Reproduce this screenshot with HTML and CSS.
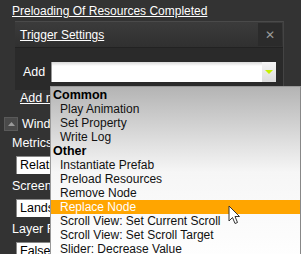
FILE: index.html
```html
<!DOCTYPE html>
<html lang="en">
<head>
	<meta charset="UTF-8">
	<title>Trigger Settings</title>
	<link rel="stylesheet" href="styles.css">
</head>
<body>
	<div class="page">
		<a class="title" href="#">Preloading Of Resources Completed</a>

		<div class="dialog">
			<div class="dlg-head">
				<a class="dlg-title" href="#">Trigger Settings</a>
				<span class="close">&#x2715;</span>
			</div>
			<div class="dlg-body">
				<label class="add-label">Add</label>
				<div class="combo">
					<div class="combo-input"></div>
					<div class="combo-btn">
						<svg width="8" height="4" viewBox="0 0 8 4"><polygon points="0,0 8,0 4,4" fill="#c6f000"/></svg>
					</div>
				</div>
			</div>
		</div>

		<div class="props">
			<a class="add-new" href="#">Add new</a>
			<div class="section">
				<span class="toggle">
					<svg width="7" height="4" viewBox="0 0 7 4"><polygon points="0,4 7,4 3.5,0" fill="#9a9a9a"/></svg>
				</span>
				<span>Window</span>
			</div>
			<div class="prop-label">Metrics</div>
			<div class="field">Relative</div>
			<div class="prop-label">Screen</div>
			<div class="field">Landscape</div>
			<div class="prop-label">Layer R</div>
			<div class="field">False</div>
		</div>

		<ul class="menu">
			<li class="group">Common</li>
			<li>Play Animation</li>
			<li>Set Property</li>
			<li>Write Log</li>
			<li class="group">Other</li>
			<li>Instantiate Prefab</li>
			<li>Preload Resources</li>
			<li>Remove Node</li>
			<li class="active">Replace Node</li>
			<li>Scroll View: Set Current Scroll</li>
			<li>Scroll View: Set Scroll Target</li>
			<li>Slider: Decrease Value</li>
		</ul>

		<svg class="cursor" width="13" height="20" viewBox="0 0 13 20">
			<path d="M1 1 L1 16 L4.5 12.5 L7 18.5 L9.5 17.5 L7 11.5 L11.5 11.5 Z" fill="#fff" stroke="#333" stroke-width="1"/>
		</svg>
	</div>
</body>
</html>
```

FILE: styles.css
```css
body {
	margin: 0;
	background: #333;
	font-family: "Liberation Sans", Arial, sans-serif;
	overflow: hidden;
}
.page {
	position: relative;
	width: 301px;
	height: 254px;
	overflow: hidden;
}
a {
	color: #fff;
}
.title {
	display: block;
	margin: 3px 0 0 12px;
	font-size: 12px;
	line-height: 16px;
	height: 18px;
}

/* dialog */
.dialog {
	margin-left: 15px;
	width: 269px;
	background: #2a2a2a;
	border-top: 1px solid #4a4a4a;
	border-right: 1px solid #444;
	box-sizing: border-box;
}
.dlg-head {
	display: flex;
	align-items: center;
	justify-content: space-between;
	height: 25px;
	padding: 0 1px 0 5px;
	background: linear-gradient(#3b3b3b, #303030);
	border-bottom: 1px solid #222;
}
.dlg-title {
	font-size: 12px;
	line-height: 16px;
}
.close {
	display: flex;
	align-items: center;
	justify-content: center;
	width: 24px;
	height: 23px;
	background: #2b2b2b;
	color: #9a9a9a;
	font-size: 12px;
	font-family: "DejaVu Sans", sans-serif;
}
.dlg-body {
	display: flex;
	align-items: center;
	height: 42px;
	padding: 0 0 0 8px;
}
.add-label {
	color: #fff;
	font-size: 12.5px;
	width: 28px;
	margin-top: 6px;
}
.combo {
	display: flex;
	margin-top: 6px;
	height: 20px;
}
.combo-input {
	width: 210px;
	background: linear-gradient(#d8d8d8, #fff 4px);
	border-left: 1px solid #999;
}
.combo-btn {
	display: flex;
	align-items: center;
	justify-content: center;
	width: 14px;
	background: linear-gradient(#f4f4f4, #dcdcdc);
}

/* property list behind the menu */
.props {
	color: #fff;
	font-size: 12.5px;
	white-space: nowrap;
}
.add-new {
	display: block;
	margin: 0 0 0 20px;
	line-height: 16px;
}
.section {
	display: flex;
	align-items: center;
	gap: 4px;
	margin: 11px 0 0 4px;
	line-height: 14px;
}
.toggle {
	display: flex;
	flex: none;
	align-items: center;
	justify-content: center;
	width: 12px;
	height: 12px;
	background: #4a4a4a;
	border: 1px solid #5a5a5a;
}
.prop-label {
	margin: 5px 0 0 12px;
	line-height: 14px;
}
.field {
	margin: 6px 0 0 16px;
	width: 70px;
	height: 17px;
	line-height: 17px;
	padding-left: 3px;
	background: #fff;
	color: #000;
	border-left: 1px solid #888;
	border-top: 1px solid #888;
}

/* dropdown */
.menu {
	position: absolute;
	left: 50px;
	top: 86px;
	width: 251px;
	height: 180px;
	margin: 0;
	padding: 1px 0 0;
	list-style: none;
	box-sizing: border-box;
	background: linear-gradient(#b4b4b4, #f6f6f6 85px, #fff);
	border-left: 1px solid #999;
	border-top: 1px solid #999;
	border-right: 1px solid #888;
	font-size: 12px;
}
.menu li {
	height: 14px;
	line-height: 14px;
	padding-left: 9px;
	color: #111;
	white-space: nowrap;
}
.menu .group {
	padding-left: 2px;
	font-size: 12.5px;
	font-weight: bold;
	color: #000;
}
.menu .active {
	background: #ffa500;
	color: #fff;
}
.cursor {
	position: absolute;
	left: 228px;
	top: 205px;
}
```
